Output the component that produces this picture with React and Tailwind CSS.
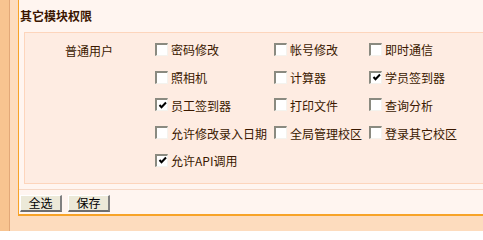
import React from "react";

const FONT = { fontFamily: '"Noto Sans CJK SC", "Noto Sans", sans-serif' };

function Box({ checked }) {
  return (
    <span className="relative inline-flex h-[13px] w-[13px] shrink-0 items-center justify-center border-t-2 border-l-2 border-r border-b border-t-[#8a8a80] border-l-[#8a8a80] border-r-[#f4f3ee] border-b-[#f4f3ee] bg-white">
      {checked && (
        <svg width="9" height="9" viewBox="0 0 9 9" className="block">
          <path d="M1.5 4 L3.5 6.2 L8 1.5" fill="none" stroke="#000" strokeWidth="2" />
        </svg>
      )}
    </span>
  );
}

function Item({ label, checked }) {
  return (
    <div className="flex h-[27.75px] items-center gap-[3px]">
      <Box checked={checked} />
      <span className="pt-[2px] text-[12px] leading-[12px] text-[#3a1800] whitespace-nowrap">{label}</span>
    </div>
  );
}

const rows = [
  [["密码修改", false], ["帐号修改", false], ["即时通信", false]],
  [["照相机", false], ["计算器", false], ["学员签到器", true]],
  [["员工签到器", true], ["打印文件", false], ["查询分析", false]],
  [["允许修改录入日期", false], ["全局管理校区", false], ["登录其它校区", false]],
  [["允许API调用", true]],
];

function Btn({ children }) {
  return (
    <button className="flex h-[17px] w-[42px] items-center justify-center border-t border-l border-r-2 border-b-2 border-t-white border-l-white border-r-[#808080] border-b-[#6e6e6e] bg-[#ece9d8] text-[12px] leading-[12px] text-black">
      {children}
    </button>
  );
}

export default function App() {
  return (
    <div className="flex h-[231px] w-[483px] overflow-hidden bg-[#fddcbe]" style={FONT}>
      <div className="h-full w-[10px] shrink-0 border-r border-[#e2a878] bg-[#f8c490]" />
      <div className="ml-[8px] flex h-[216px] w-[600px] shrink-0 flex-col border-l border-b-2 border-[#f7a328] bg-[#fff5f0]">
        <div className="flex h-[32px] items-start pl-[1px] pt-[9px]">
          <span className="text-[12px] font-bold leading-[13px] text-[#3a1500]">其它模块权限</span>
        </div>
        <div className="ml-[5px] flex h-[152px] w-[580px] shrink-0 border border-[#fdd5bc] bg-[#feece2] pt-[2.5px]">
          <div className="w-[130px] shrink-0 pl-[40px] pt-[9px] text-[12px] leading-[12px] text-[#3a1800]">普通用户</div>
          <div className="flex flex-col">
            {rows.map((r, i) => (
              <div key={i} className="grid grid-cols-[119px_95px_auto]">
                {r.map(([l, c]) => (
                  <Item key={l} label={l} checked={c} />
                ))}
              </div>
            ))}
          </div>
        </div>
        <div className="h-[5px]" />
        <div className="h-px bg-[#f6d8c6]" />
        <div className="flex gap-[6px] pl-[1px] pt-[5px]">
          <Btn>全选</Btn>
          <Btn>保存</Btn>
        </div>
      </div>
    </div>
  );
}
